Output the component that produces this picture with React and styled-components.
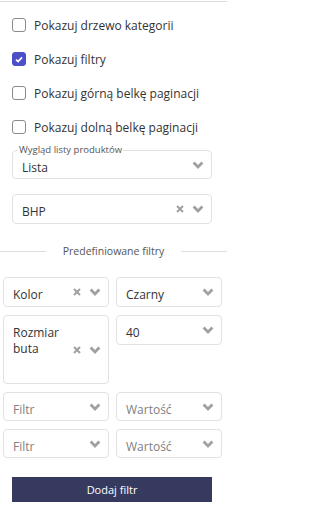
import React from "react"
import styled, { createGlobalStyle } from "styled-components"

const GlobalStyle = createGlobalStyle`
*{
  margin:0;
  padding:0;
  box-sizing:border-box;
}
body{
  background-color:#fff;
  font-family:"Open Sans","Noto Sans",Arial,sans-serif;
  color:#333;
}
`

const Panel = styled.div`
margin-top:1px;
border-top:1px solid #dcdcdc;
width:227px;
padding-bottom:9px;
`

const CheckList = styled.div`
padding:6px 12px 0;
`

const CheckRow = styled.label`
display:flex;
align-items:center;
gap:8px;
height:34px;
font-size:12px;
color:#333;
cursor:pointer;
`

const Box = styled.span`
width:14px;
height:14px;
border-radius:3px;
border:1px solid ${p => (p.checked ? "#4b50c8" : "#8a8a8a")};
background:${p => (p.checked ? "#4b50c8" : "#fff")};
display:flex;
align-items:center;
justify-content:center;
flex-shrink:0;
`

const Selects = styled.div`
padding:0 15px 0 12px;
display:flex;
flex-direction:column;
`

const Select = styled.div`
position:relative;
display:flex;
height:${p => p.h || 30}px;
margin-top:${p => p.mt || 0}px;
border:1px solid #e2e2e2;
border-radius:4px;
background:#fff;
`

const Legend = styled.span`
position:absolute;
top:-7px;
left:5px;
padding:0 1px;
background:#fff;
font-size:9.5px;
line-height:12px;
color:#555;
`

const Value = styled.div`
flex:1;
min-width:0;
padding:9px 0 0 9px;
font-size:12px;
line-height:16px;
color:${p => (p.placeholder ? "#808080" : "#333")};
`

const Indicators = styled.div`
display:flex;
align-items:center;
gap:8px;
padding-right:7px;
`

const Divider = styled.div`
display:flex;
align-items:center;
margin-top:20px;
height:14px;
font-size:10.5px;
color:#555;
&::before,&::after{
  content:"";
  flex:1;
  height:1px;
  background:#ddd;
}
`

const DividerText = styled.span`
margin:0 17px;
white-space:nowrap;
`

const Grid = styled.div`
display:grid;
grid-template-columns:106px 106px;
column-gap:7px;
row-gap:8px;
align-items:start;
padding-left:3px;
margin-top:19px;
`

const Btn = styled.button`
display:block;
margin:19px 0 0 12px;
width:200px;
height:25px;
border:none;
background-color:#363a5f;
color:#fff;
font-family:inherit;
font-size:11px;
cursor:pointer;
`

const Chevron = () => (
  <svg width="12" height="8" viewBox="0 0 12 8">
    <polyline points="1.6,1.6 6,6 10.4,1.6" fill="none" stroke="#a0a0a0" strokeWidth="2.8" strokeLinecap="butt" strokeLinejoin="miter" />
  </svg>
)

const Cross = () => (
  <svg width="8" height="8" viewBox="0 0 8 8">
    <path d="M1 1L7 7M7 1L1 7" stroke="#a0a0a0" strokeWidth="2" />
  </svg>
)

const Check = () => (
  <svg width="8" height="7" viewBox="0 0 8 7">
    <polyline points="1,3.6 3.1,5.5 7,1.4" fill="none" stroke="#fff" strokeWidth="1.7" />
  </svg>
)

const Dropdown = ({ value, placeholder, clearable, h, mt, legend }) => (
  <Select h={h} mt={mt}>
    {legend && <Legend>{legend}</Legend>}
    <Value placeholder={placeholder ? 1 : 0}>{value || placeholder}</Value>
    <Indicators>
      {clearable && <Cross />}
      <Chevron />
    </Indicators>
  </Select>
)

const opcje = [
  { label: "Pokazuj drzewo kategorii", checked: false },
  { label: "Pokazuj filtry", checked: true },
  { label: "Pokazuj górną belkę paginacji", checked: false },
  { label: "Pokazuj dolną belkę paginacji", checked: false },
]

export default function App() {
  return (
    <Panel>
      <GlobalStyle />
      <CheckList>
        {opcje.map(o => (
          <CheckRow key={o.label}>
            <Box checked={o.checked}>{o.checked && <Check />}</Box>
            {o.label}
          </CheckRow>
        ))}
      </CheckList>
      <Selects>
        <Dropdown legend="Wygląd listy produktów" value="Lista" h={29} mt={6} />
        <Dropdown value="BHP" clearable h={30} mt={15} />
      </Selects>
      <Divider>
        <DividerText>Predefiniowane filtry</DividerText>
      </Divider>
      <Grid>
        <Dropdown value="Kolor" clearable h={30} />
        <Dropdown value="Czarny" h={30} />
        <Dropdown value="Rozmiar buta" clearable h={69} />
        <Dropdown value="40" h={30} />
        <Dropdown placeholder="Filtr" h={29} />
        <Dropdown placeholder="Wartość" h={29} />
        <Dropdown placeholder="Filtr" h={29} />
        <Dropdown placeholder="Wartość" h={29} />
      </Grid>
      <Btn>Dodaj filtr</Btn>
    </Panel>
  )
}
